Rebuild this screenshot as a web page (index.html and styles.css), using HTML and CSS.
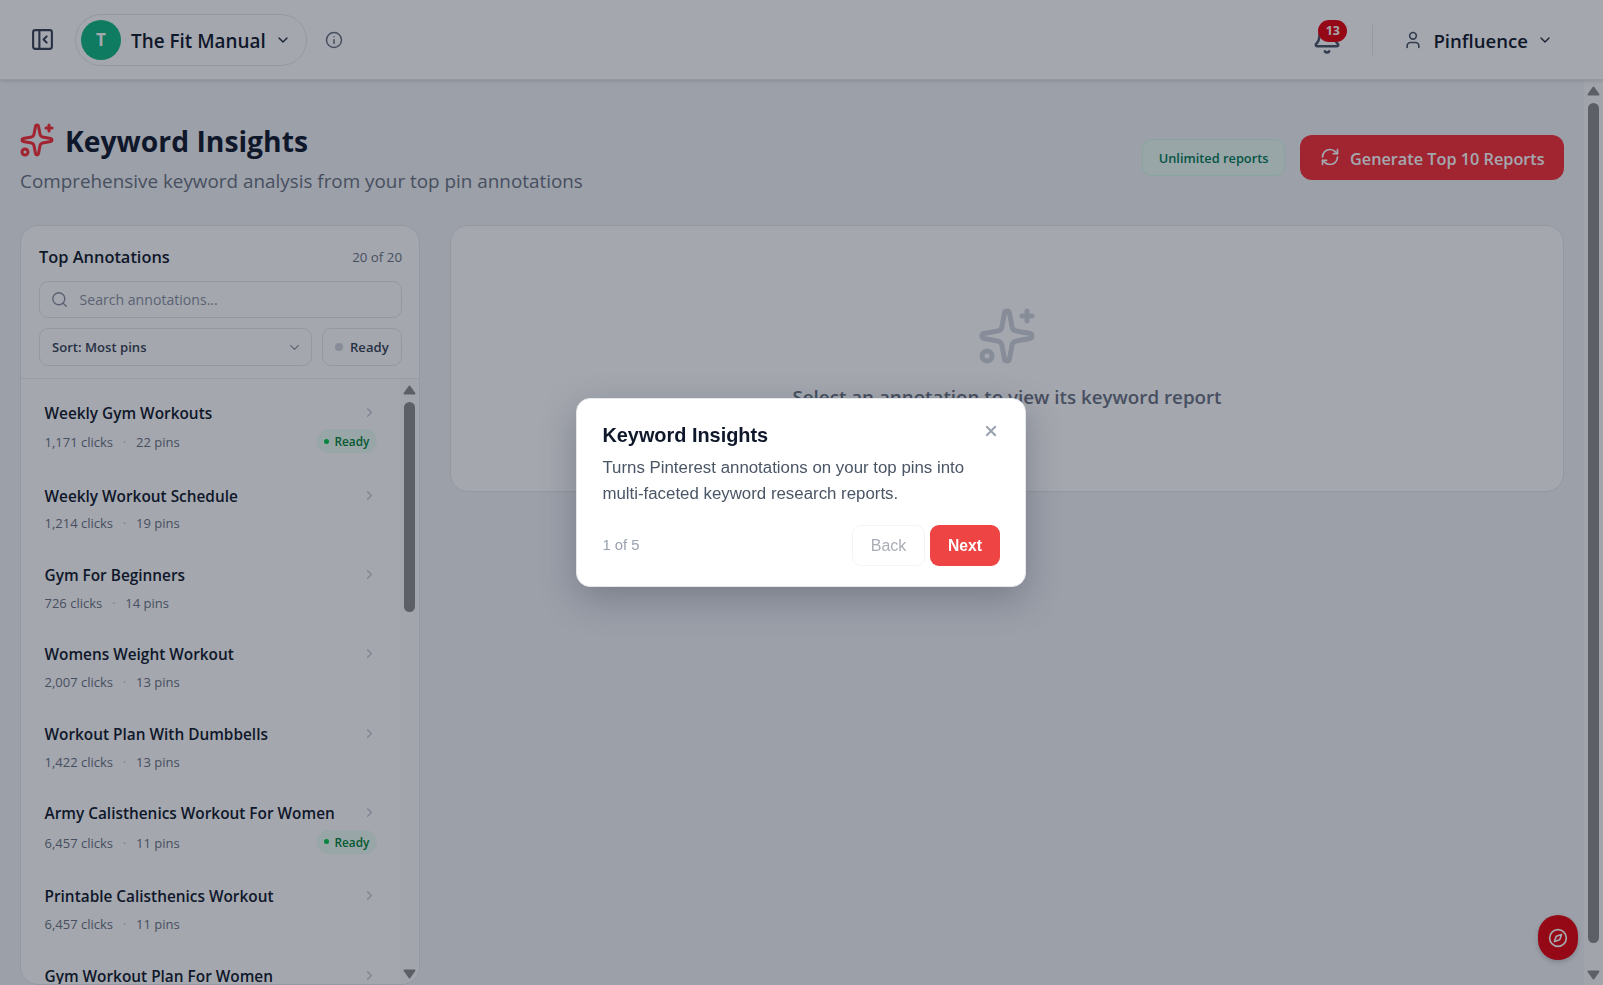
FILE: index.html
```html
<!DOCTYPE html>
<html lang="en">
<head>
<meta charset="utf-8">
<title>Keyword Insights</title>
<link rel="stylesheet" href="styles.css">
</head>
<body>
<svg class="defs" width="0" height="0">
  <symbol id="chev-down" viewBox="0 0 24 24"><path d="m6 9 6 6 6-6"/></symbol>
  <symbol id="chev-right" viewBox="0 0 24 24"><path d="m9 18 6-6-6-6"/></symbol>
  <symbol id="sparkles" viewBox="0 0 24 24"><path d="M11.017 2.814a1 1 0 0 1 1.966 0l1.051 5.558a2 2 0 0 0 1.594 1.594l5.558 1.051a1 1 0 0 1 0 1.966l-5.558 1.051a2 2 0 0 0-1.594 1.594l-1.051 5.558a1 1 0 0 1-1.966 0l-1.051-5.558a2 2 0 0 0-1.594-1.594l-5.558-1.051a1 1 0 0 1 0-1.966l5.558-1.051a2 2 0 0 0 1.594-1.594z"/><path d="M20 2v4"/><path d="M22 4h-4"/><circle cx="4" cy="20" r="2"/></symbol>
</svg>

<div class="app">
  <header class="topbar">
    <svg class="icon panel-icon" viewBox="0 0 24 24"><rect width="18" height="18" x="3" y="3" rx="2"/><path d="M9 3v18"/><path d="m16 15-3-3 3-3"/></svg>
    <div class="account">
      <span class="avatar">T</span>
      <span class="account-name">The Fit Manual</span>
      <svg class="icon chev"><use href="#chev-down"/></svg>
    </div>
    <svg class="icon info" viewBox="0 0 24 24"><circle cx="12" cy="12" r="10"/><path d="M12 16.5v-5"/><path d="M12 7.8h.01"/></svg>
    <div class="topbar-right">
      <div class="bell-wrap">
        <svg class="icon bell" viewBox="0 0 24 24"><path d="M10.268 21a2 2 0 0 0 3.464 0"/><path d="M3.262 15.326A1 1 0 0 0 4 17h16a1 1 0 0 0 .74-1.673C19.41 13.956 18 12.499 18 8A6 6 0 0 0 6 8c0 4.499-1.411 5.956-2.738 7.326"/></svg>
        <span class="badge">13</span>
      </div>
      <span class="divider"></span>
      <div class="user">
        <svg class="icon user-icon" viewBox="0 0 24 24"><path d="M19 21v-2a4 4 0 0 0-4-4H9a4 4 0 0 0-4 4v2"/><circle cx="12" cy="7" r="4"/></svg>
        <span class="user-name">Pinfluence</span>
        <svg class="icon chev"><use href="#chev-down"/></svg>
      </div>
    </div>
  </header>

  <div class="viewport">
    <main class="page">
      <div class="page-head">
        <div>
          <h1><svg class="icon"><use href="#sparkles"/></svg>Keyword Insights</h1>
          <p class="subtitle">Comprehensive keyword analysis from your top pin annotations</p>
        </div>
        <div class="actions">
          <span class="tag">Unlimited reports</span>
          <button class="generate"><svg class="icon" viewBox="0 0 24 24"><path d="M3 12a9 9 0 0 1 9-9 9.75 9.75 0 0 1 6.74 2.74L21 8"/><path d="M21 3v5h-5"/><path d="M21 12a9 9 0 0 1-9 9 9.75 9.75 0 0 1-6.74-2.74L3 16"/><path d="M8 16H3v5"/></svg><span>Generate Top 10 Reports</span></button>
        </div>
      </div>

      <div class="columns">
        <section class="card list-card">
          <div class="list-head">
            <div class="list-title"><h2>Top Annotations</h2><span>20 of 20</span></div>
            <div class="search"><svg class="icon" viewBox="0 0 24 24"><circle cx="11" cy="11" r="8.5"/><path d="m21.5 21.5-4.3-4.3"/></svg><span>Search annotations...</span></div>
            <div class="filters">
              <div class="sort"><span>Sort: Most pins</span><svg class="icon"><use href="#chev-down"/></svg></div>
              <div class="ready-filter"><i></i><span>Ready</span></div>
            </div>
          </div>
          <div class="list-body">
            <div class="items">
              <div class="item"><div class="row"><b>Weekly Gym Workouts</b><svg class="icon"><use href="#chev-right"/></svg></div><div class="meta tall"><span>1,171 clicks</span><em>·</em><span>22 pins</span><span class="pill"><i></i>Ready</span></div></div>
              <div class="item"><div class="row"><b>Weekly Workout Schedule</b><svg class="icon"><use href="#chev-right"/></svg></div><div class="meta"><span>1,214 clicks</span><em>·</em><span>19 pins</span></div></div>
              <div class="item"><div class="row"><b>Gym For Beginners</b><svg class="icon"><use href="#chev-right"/></svg></div><div class="meta"><span>726 clicks</span><em>·</em><span>14 pins</span></div></div>
              <div class="item"><div class="row"><b>Womens Weight Workout</b><svg class="icon"><use href="#chev-right"/></svg></div><div class="meta"><span>2,007 clicks</span><em>·</em><span>13 pins</span></div></div>
              <div class="item"><div class="row"><b>Workout Plan With Dumbbells</b><svg class="icon"><use href="#chev-right"/></svg></div><div class="meta"><span>1,422 clicks</span><em>·</em><span>13 pins</span></div></div>
              <div class="item"><div class="row"><b>Army Calisthenics Workout For Women</b><svg class="icon"><use href="#chev-right"/></svg></div><div class="meta tall"><span>6,457 clicks</span><em>·</em><span>11 pins</span><span class="pill"><i></i>Ready</span></div></div>
              <div class="item"><div class="row"><b>Printable Calisthenics Workout</b><svg class="icon"><use href="#chev-right"/></svg></div><div class="meta"><span>6,457 clicks</span><em>·</em><span>11 pins</span></div></div>
              <div class="item"><div class="row"><b>Gym Workout Plan For Women</b><svg class="icon"><use href="#chev-right"/></svg></div></div>
            </div>
            <div class="scrollbar inner-bar">
              <svg class="arrow" viewBox="0 0 13 10"><path d="M6.5 1.5 11.5 8.5H1.5Z"/></svg>
              <span class="thumb"></span>
              <svg class="arrow end" viewBox="0 0 13 10"><path d="M6.5 8.5 11.5 1.5H1.5Z"/></svg>
            </div>
          </div>
        </section>

        <section class="card empty-card">
          <svg class="icon"><use href="#sparkles"/></svg>
          <p>Select an annotation to view its keyword report</p>
        </section>
      </div>
    </main>
    <div class="scrollbar page-bar">
      <svg class="arrow" viewBox="0 0 13 10"><path d="M6.5 1.5 11.5 8.5H1.5Z"/></svg>
      <span class="thumb"></span>
      <svg class="arrow end" viewBox="0 0 13 10"><path d="M6.5 8.5 11.5 1.5H1.5Z"/></svg>
    </div>
  </div>
  <div class="fab"><svg class="icon" viewBox="0 0 24 24"><circle cx="12" cy="12" r="10"/><path d="m16.24 7.76-1.804 5.411a2 2 0 0 1-1.265 1.265L7.76 16.24l1.804-5.411a2 2 0 0 1 1.265-1.265z"/></svg></div>
</div>

<div class="overlay"></div>
<div class="dialog">
  <div class="dialog-head"><h3>Keyword Insights</h3><svg class="close" viewBox="0 0 12 12"><path d="M1.3 1.3 10.7 10.7M10.7 1.3 1.3 10.7"/></svg></div>
  <p>Turns Pinterest annotations on your top pins into<br>multi-faceted keyword research reports.</p>
  <div class="dialog-foot"><span class="step">1 of 5</span><button class="back">Back</button><button class="next">Next</button></div>
</div>
</body>
</html>
```
FILE: styles.css
```css
* { box-sizing: border-box; margin: 0; padding: 0; }
html, body { height: 100%; overflow: hidden; }
body { font-family: "Open Sans", "Noto Sans", sans-serif; color: #0f172b; background: #f3f4f7; }
button { font: inherit; border: 0; }
.defs { position: absolute; }
.icon { fill: none; stroke: currentColor; stroke-width: 2; stroke-linecap: round; stroke-linejoin: round; flex: none; }

.app { display: flex; flex-direction: column; height: 985px; }

/* Top bar */
.topbar { display: flex; align-items: center; height: 80px; padding: 0 50px 0 30px; background: #fff; border-bottom: 1px solid #e5e7eb; box-shadow: 0 1px 4px rgba(0,0,0,.14); z-index: 1; }
.panel-icon { width: 25px; height: 25px; color: #364153; }
.account { display: flex; align-items: center; width: 232px; height: 52px; margin-left: 20px; padding-left: 5px; border: 1px solid #e5e7eb; border-radius: 26px; }
.avatar { width: 40px; height: 40px; border-radius: 50%; background: #10b981; color: #fff; font-size: 17px; font-weight: 700; line-height: 39px; text-align: center; }
.account-name { margin-left: 10px; padding-top: 2px; font-size: 18.9px; font-weight: 600; line-height: 26px; white-space: nowrap; }
.chev { width: 16px; height: 16px; color: #1e2939; }
.account .chev { margin-left: 9px; }
.info { width: 18px; height: 18px; margin-left: 18px; color: #6a7282; }
.topbar-right { display: flex; align-items: center; margin-left: auto; }
.bell-wrap { position: relative; width: 30px; height: 30px; margin-right: 30px; }
.bell { display: block; width: 30px; height: 30px; color: #4a5565; }
.badge { position: absolute; left: 6px; top: -5px; width: 29px; height: 22px; border-radius: 11px; background: #e7000b; color: #fff; font-size: 12.4px; font-weight: 700; line-height: 22px; text-align: center; }
.divider { width: 1px; height: 30px; background: #e5e7eb; }
.user { display: flex; align-items: center; margin-left: 30px; }
.user-icon { width: 20px; height: 20px; color: #4a5565; }
.user-name { margin: 0 9px 0 10px; padding-top: 1px; font-size: 18.6px; font-weight: 600; }

/* Page */
.viewport { display: flex; height: 905px; }
.page { flex: 1; padding: 40px 20px 0 20px; }
.page-head { display: flex; justify-content: space-between; height: 105px; }
h1 { display: flex; align-items: center; height: 44px; padding-bottom: 2px; font-size: 28.3px; font-weight: 700; line-height: 42px; }
h1 .icon { width: 36px; height: 36px; margin: -3px 10px 0 -1px; color: #fb2c36; }
.subtitle { padding-top: 3px; color: #6a7282; font-size: 18.86px; line-height: 28px; }
.actions { display: flex; align-items: center; height: 75px; }
.tag { height: 37px; margin-right: 15px; padding: 0 15.5px; border: 1px solid #d0fae5; border-radius: 10px; background: #ecfdf5; color: #007a55; font-size: 12.8px; font-weight: 600; line-height: 36px; }
.generate { display: flex; align-items: center; width: 264px; height: 45px; padding-left: 20px; border-radius: 12px; background: #fb2c36; color: #fff; font-size: 16.25px; font-weight: 600; white-space: nowrap; }
.generate .icon { width: 20px; height: 20px; margin: -1px 10px 0 0; }
.generate span { padding-top: 2px; }

.columns { display: flex; gap: 30px; align-items: flex-start; }
.card { border: 1px solid #e5e7eb; border-radius: 18px; background: #fff; }
.list-card { display: flex; flex-direction: column; width: 400px; height: 760px; overflow: hidden; }
.list-head { height: 153px; padding: 18px 17px 0 18px; border-bottom: 1px solid #ebedf0; }
.list-title { display: flex; align-items: center; justify-content: space-between; height: 26px; }
.list-title h2 { padding-bottom: 1px; font-size: 16.4px; font-weight: 600; line-height: 22px; }
.list-title span { color: #6a7282; font-size: 13.3px; }
.search { display: flex; align-items: center; height: 37px; margin-top: 11px; padding-left: 11px; border: 1px solid #e5e7eb; border-radius: 9px; color: #8a91a0; font-size: 14.1px; }
.search .icon { width: 17px; height: 17px; margin: -1px 11.5px 0 0; }
.filters { display: flex; gap: 10px; margin-top: 10px; color: #364153; font-size: 13.1px; font-weight: 600; }
.sort, .ready-filter { display: flex; align-items: center; height: 38px; border: 1px solid #e5e7eb; border-radius: 9px; }
.sort { flex: 1; justify-content: space-between; padding: 0 9px 0 12px; }
.sort .icon { width: 15px; height: 15px; color: #8a91a0; }
.ready-filter { width: 80px; padding-left: 12px; }
.ready-filter i { width: 8px; height: 8px; margin-right: 7px; border-radius: 50%; background: #d1d5dc; }
.list-body { display: flex; flex: 1; min-height: 0; overflow: hidden; }
.items { flex: 1; padding: 7.4px 20px 0 23.5px; }
.item { padding: 15.4px 0; }
.row { display: flex; align-items: center; justify-content: space-between; height: 24px; }
.row b { font-size: 15.38px; font-weight: 600; line-height: 24px; white-space: nowrap; }
.row .icon { width: 15px; height: 15px; margin: -3px 3px 0 0; color: #c3c8d0; }
.meta { display: flex; align-items: center; height: 20px; margin-top: 4.7px; color: #6a7282; font-size: 13px; }
.meta.tall { height: 23.3px; }
.meta em { width: 23px; font-style: normal; text-align: center; color: #c3c8d0; }
.pill { display: flex; align-items: center; width: 60px; height: 24px; margin: -2px 3.5px 0 auto; padding-left: 7px; border-radius: 12px; background: #ecfdf5; color: #008236; font-size: 11.8px; font-weight: 600; }
.pill i { width: 5px; height: 5px; margin-right: 6px; border-radius: 50%; background: #00c950; }

.scrollbar { display: flex; flex-direction: column; align-items: center; width: 19px; background: #fcfcfc; }
.scrollbar .thumb { width: 11px; border-radius: 6px; background: #8b8b8b; }
.arrow { width: 13px; height: 10px; fill: #8b8b8b; stroke: #8b8b8b; stroke-width: 2; stroke-linejoin: round; }
.arrow.end { margin-top: auto; }
.inner-bar { padding: 6px 0 5px; }
.inner-bar .thumb { height: 210px; margin-top: 7px; }
.page-bar { padding: 6px 0 5px; background: #fafafa; }
.page-bar .thumb { height: 840px; margin-top: 7px; }

.empty-card { display: flex; flex-direction: column; align-items: center; width: 1114px; height: 267px; padding-top: 80px; }
.empty-card .icon { width: 60px; height: 60px; color: #d1d5dc; }
.empty-card p { margin-top: 17px; color: #6a7282; font-size: 18.78px; font-weight: 600; line-height: 28px; }

.fab { position: absolute; left: 1538px; top: 915px; display: flex; align-items: center; justify-content: center; width: 40px; height: 45px; border-radius: 20px; background: #e7000b; color: #fff; box-shadow: 0 2px 5px rgba(0,0,0,.2); }
.fab .icon { width: 20px; height: 20px; }

/* Tour dialog */
.overlay { position: fixed; inset: 0; z-index: 5; background: rgba(15,23,42,.38); }
.dialog { position: absolute; left: 576px; top: 398px; z-index: 6; width: 450px; height: 189px; padding: 21px 25px 0 25.4px; border: 1px solid #e5e7eb; border-radius: 14px; background: #fff; box-shadow: 0 12px 36px rgba(15,23,42,.25); font-family: "Liberation Sans", Arial, sans-serif; }
.dialog-head { display: flex; justify-content: space-between; height: 35px; }
.dialog h3 { font-size: 19.9px; font-weight: 700; line-height: 30px; }
.close { width: 12px; height: 12px; margin: 5px 3px 0 0; fill: none; stroke: #99a1af; stroke-width: 2; }
.dialog p { color: #4a5565; font-size: 16.85px; line-height: 26px; white-space: nowrap; }
.dialog-foot { display: flex; align-items: center; margin-top: 18px; }
.step { flex: 1; padding-bottom: 2px; color: #99a1af; font-size: 14.9px; }
.back, .next { height: 41px; border-radius: 9px; font-size: 16px; }
.back { width: 73px; margin-right: 5px; border: 1px solid #f3f4f6; background: #fff; color: #a9adb5; }
.next { width: 70px; background: #ef4444; color: #fff; font-weight: 700; font-size: 15.7px; }
```
